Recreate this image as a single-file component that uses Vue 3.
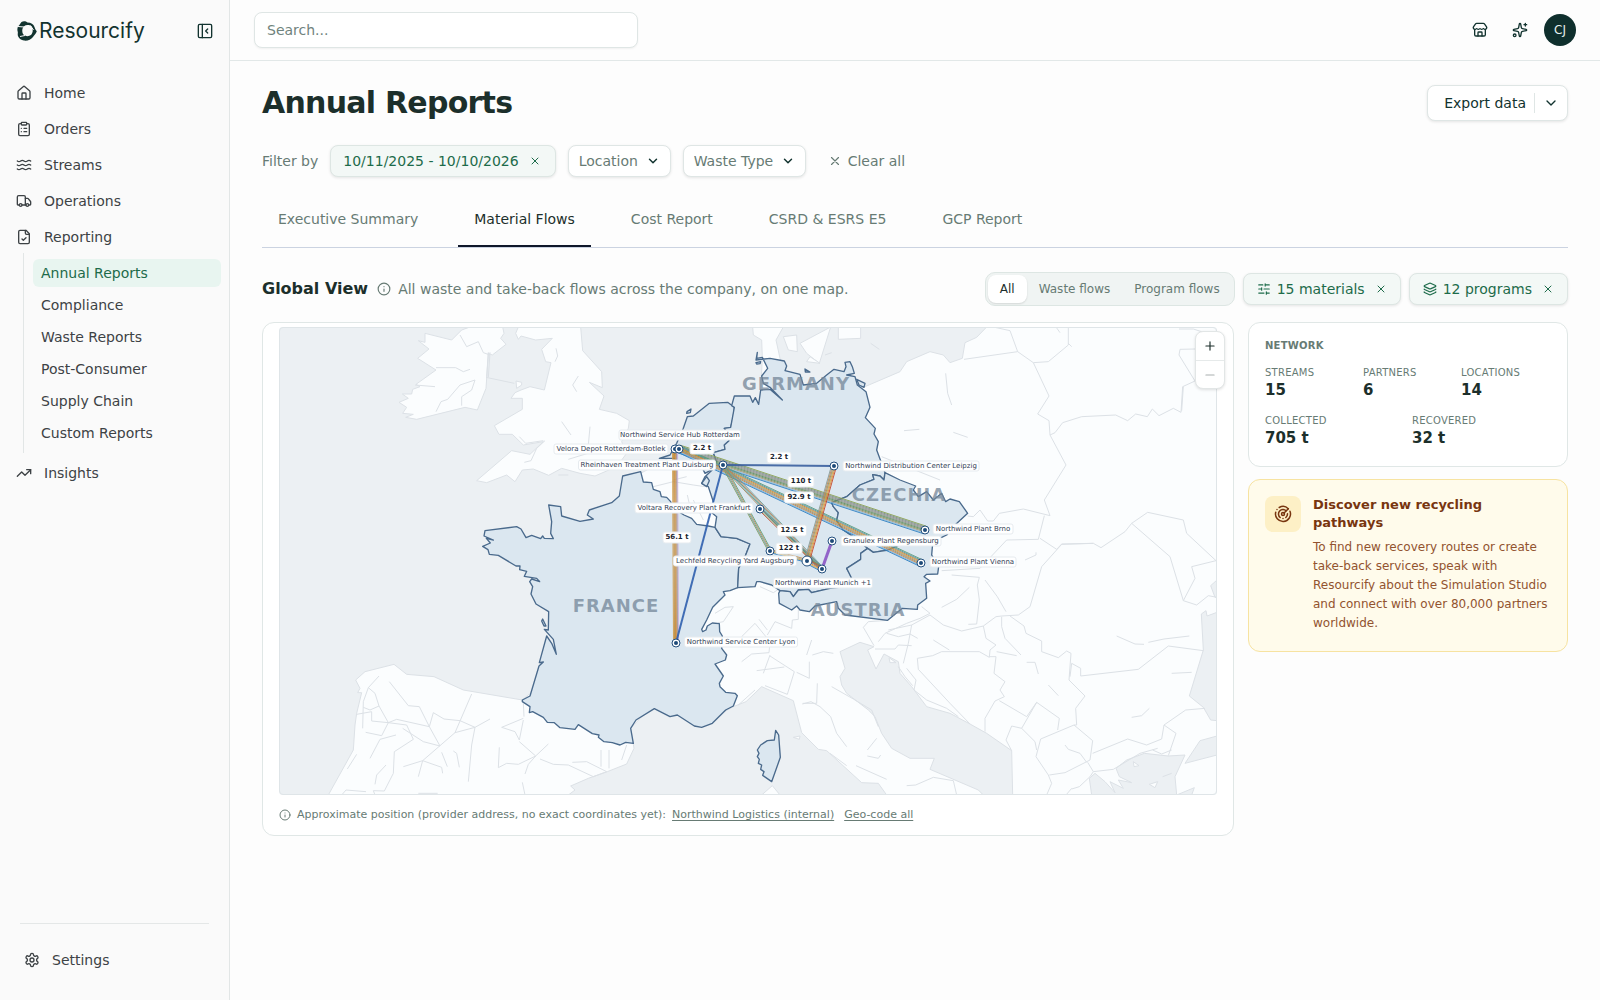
<script setup>
import { h, ref } from 'vue'

const icons = {
  house: '<path d="M15 21v-8a1 1 0 0 0-1-1h-4a1 1 0 0 0-1 1v8"/><path d="M3 10a2 2 0 0 1 .709-1.528l7-6a2 2 0 0 1 2.582 0l7 6A2 2 0 0 1 21 10v9a2 2 0 0 1-2 2H5a2 2 0 0 1-2-2z"/>',
  clipboard: '<rect width="8" height="4" x="8" y="2" rx="1"/><path d="M16 4h2a2 2 0 0 1 2 2v14a2 2 0 0 1-2 2H6a2 2 0 0 1-2-2V6a2 2 0 0 1 2-2h2"/><path d="M12 11h4M12 16h4M8 11h.01M8 16h.01"/>',
  waves: '<path d="M2 6c.6.5 1.200 1 2.500 1C7 7 7 5 9.500 5c2.600 0 2.400 2 5 2 2.500 0 2.500-2 5-2 1.300 0 1.900.5 2.500 1"/><path d="M2 12c.6.5 1.200 1 2.500 1 2.500 0 2.500-2 5-2 2.600 0 2.400 2 5 2 2.500 0 2.500-2 5-2 1.300 0 1.900.5 2.500 1"/><path d="M2 18c.6.5 1.200 1 2.500 1 2.500 0 2.500-2 5-2 2.600 0 2.400 2 5 2 2.500 0 2.500-2 5-2 1.300 0 1.900.5 2.500 1"/>',
  truck: '<path d="M14 18V6a2 2 0 0 0-2-2H4a2 2 0 0 0-2 2v11a1 1 0 0 0 1 1h2"/><path d="M15 18H9"/><path d="M19 18h2a1 1 0 0 0 1-1v-3.650a1 1 0 0 0-.22-.624l-3.480-4.350A1 1 0 0 0 17.520 8H14"/><circle cx="17" cy="18" r="2"/><circle cx="7" cy="18" r="2"/>',
  fileCheck: '<path d="M15 2H6a2 2 0 0 0-2 2v16a2 2 0 0 0 2 2h12a2 2 0 0 0 2-2V7Z"/><path d="M14 2v4a2 2 0 0 0 2 2h4"/><path d="m9 15 2 2 4-4"/>',
  trend: '<path d="M16 7h6v6"/><path d="m22 7-8.500 8.500-5-5L2 17"/>',
  settings: '<path d="M12.220 2h-.44a2 2 0 0 0-2 2v.18a2 2 0 0 1-1 1.730l-.43.25a2 2 0 0 1-2 0l-.15-.08a2 2 0 0 0-2.730.73l-.22.38a2 2 0 0 0 .73 2.730l.15.1a2 2 0 0 1 1 1.720v.51a2 2 0 0 1-1 1.740l-.15.09a2 2 0 0 0-.73 2.730l.22.38a2 2 0 0 0 2.730.73l.15-.08a2 2 0 0 1 2 0l.43.25a2 2 0 0 1 1 1.730V20a2 2 0 0 0 2 2h.44a2 2 0 0 0 2-2v-.18a2 2 0 0 1 1-1.730l.43-.25a2 2 0 0 1 2 0l.15.08a2 2 0 0 0 2.730-.73l.22-.39a2 2 0 0 0-.73-2.730l-.15-.08a2 2 0 0 1-1-1.740v-.5a2 2 0 0 1 1-1.740l.15-.09a2 2 0 0 0 .73-2.730l-.22-.38a2 2 0 0 0-2.730-.73l-.15.08a2 2 0 0 1-2 0l-.43-.25a2 2 0 0 1-1-1.730V4a2 2 0 0 0-2-2z"/><circle cx="12" cy="12" r="3"/>',
  panel: '<rect width="20" height="20" x="2" y="2" rx="2"/><path d="M8 2v20M16 15l-3-3 3-3"/>',
  store: '<path d="M15 21v-5a1 1 0 0 0-1-1h-4a1 1 0 0 0-1 1v5"/><path d="M17.774 10.310a1.120 1.120 0 0 0-1.549 0 2.500 2.500 0 0 1-3.451 0 1.120 1.120 0 0 0-1.548 0 2.500 2.500 0 0 1-3.452 0 1.120 1.120 0 0 0-1.549 0 2.500 2.500 0 0 1-3.770-3.248l2.889-4.184A2 2 0 0 1 7 2h10a2 2 0 0 1 1.653.873l2.895 4.192a2.500 2.500 0 0 1-3.774 3.244"/><path d="M4 10.950V19a2 2 0 0 0 2 2h12a2 2 0 0 0 2-2v-8.050"/>',
  sparkles: '<path d="M11.017 2.814a1 1 0 0 1 1.966 0l1.051 5.558a2 2 0 0 0 1.594 1.594l5.558 1.051a1 1 0 0 1 0 1.966l-5.558 1.051a2 2 0 0 0-1.594 1.594l-1.051 5.558a1 1 0 0 1-1.966 0l-1.051-5.558a2 2 0 0 0-1.594-1.594l-5.558-1.051a1 1 0 0 1 0-1.966l5.558-1.051a2 2 0 0 0 1.594-1.594z"/><path d="M20 2v4M22 4h-4"/><circle cx="4" cy="20" r="2"/>',
  chevron: '<path d="m6 9 6 6 6-6"/>',
  x: '<path d="M18 6 6 18M6 6l12 12"/>',
  info: '<circle cx="12" cy="12" r="10"/><path d="M12 16v-4M12 8h.01"/>',
  sliders: '<path d="M10 5H3M12 19H3M14 3v4M16 17v4M21 12h-9M21 19h-5M21 5h-7M8 10v4M8 12H3"/>',
  layers: '<path d="M12.830 2.180a2 2 0 0 0-1.660 0L2.600 6.080a1 1 0 0 0 0 1.830l8.580 3.910a2 2 0 0 0 1.660 0l8.580-3.900a1 1 0 0 0 0-1.830z"/><path d="M2 12a1 1 0 0 0 .58.91l8.600 3.910a2 2 0 0 0 1.650 0l8.580-3.900A1 1 0 0 0 22 12"/><path d="M2 17a1 1 0 0 0 .58.91l8.600 3.910a2 2 0 0 0 1.650 0l8.580-3.900A1 1 0 0 0 22 17"/>',
  radar: '<path d="M19.070 4.930A10 10 0 0 0 6.990 3.340M4 6h.01M2.290 9.620a10 10 0 1 0 19.020-1.270M16.240 7.760a6 6 0 1 0-8.010 8.910M12 18h.01M17.990 11.660a6 6 0 0 1-2.220 5.010"/><circle cx="12" cy="12" r="2"/><path d="m13.410 10.590 5.660-5.660"/>',
  plus: '<path d="M5 12h14M12 5v14"/>',
  minus: '<path d="M5 12h14"/>',
}

const Icon = (props) =>
  h('svg', {
    viewBox: '0 0 24 24',
    width: props.size || 16,
    height: props.size || 16,
    fill: 'none',
    stroke: 'currentColor',
    'stroke-width': props.stroke || 2,
    'stroke-linecap': 'round',
    'stroke-linejoin': 'round',
    'aria-hidden': 'true',
    innerHTML: icons[props.name],
  })
Icon.props = ['name', 'size', 'stroke']

const mainNav = [
  { label: 'Home', icon: 'house' },
  { label: 'Orders', icon: 'clipboard' },
  { label: 'Streams', icon: 'waves' },
  { label: 'Operations', icon: 'truck' },
  { label: 'Reporting', icon: 'fileCheck' },
]
const reportNav = ['Annual Reports', 'Compliance', 'Waste Reports', 'Post-Consumer', 'Supply Chain', 'Custom Reports']

const tabs = ['Executive Summary', 'Material Flows', 'Cost Report', 'CSRD & ESRS E5', 'GCP Report']
const activeTab = ref('Material Flows')
const flowModes = ['All', 'Waste flows', 'Program flows']
const flowMode = ref('All')

const statsTop = [
  { label: 'Streams', value: '15' },
  { label: 'Partners', value: '6' },
  { label: 'Locations', value: '14' },
]
const statsBottom = [
  { label: 'Collected', value: '705 t' },
  { label: 'Recovered', value: '32 t' },
]

/* Terrain outlines, in terrain units (three per map unit) */
const land = [
  '495,40 575,60 605,30 630,21 728,21 732,40 722,55 738,73 697,105 685,100 678,205 652,270 615,262 470,298 437,292 460,283 428,280 440,262 417,247 445,235 427,222 455,222 458,208 480,200 468,193 528,150 473,115 507,87 475,62 495,67',
  '775,21 767,40 775,58 783,48 827,60 877,55 845,88 857,125 873,128 853,210 810,200 783,210 765,218 753,235 787,235 787,268 703,317 717,343 757,343 790,375 850,365 810,403 755,392 650,482 680,488 740,465 765,485 787,450 820,447 866,466 905,445 960,460 1005,468 1070,440 1100,400 1085,365 1105,325 1108,302 1070,280 1018,268 1032,228 988,187 1027,203 1025,155 968,92 962,21',
  '768,183 785,187 785,195 770,205',
  '205,1425 280,1290 285,1215 290,1180 305,1118 293,1118 300,1105 287,1080 315,1055 402,1033 440,1063 522,1070 610,1110 787,1140 950,1000 1142,460 1235,410 1300,330 1423,270 1500,260 1507,112 1505,60 1480,45 1478,21 1570,21 1548,60 1560,115 1600,240 1815,200 1920,155 1940,125 2010,95 2050,105 2070,128 2107,115 2115,68 2150,52 2180,21 2871,21 2871,1425',
  '1570,50 1610,45 1612,95 1585,90',
  '1620,70 1712,21 1678,130 1640,100',
  '1735,21 1802,21 1802,55 1735,58',
  '1640,125 1650,110 1680,130',
]
const seas = [
  '925,1425 945,1410 932,1398 985,1375 1042,1355 1100,1332 1122,1285 1112,1225 1183,1150 1250,1180 1330,1210 1420,1160 1458,1145 1505,1100 1600,1142 1625,1238 1675,1288 1700,1292 1805,1388 1855,1390 1880,1425',
  '1740,995 1800,967 1842,980 1823,990 1848,1047 1872,1002 1915,1025 1920,1060 1955,1100 2000,1160 2070,1180 2130,1212 2180,1240 2255,1292 2258,1425 2170,1425 2155,1410 2010,1348 2023,1315 1950,1315 1895,1285 1865,1240 1845,1190 1825,1170 1760,1120 1745,1095 1740,1070 1755,1045',
  '2871,877 2841,888 2838,872 2824,882 2830,990 2788,1128 2830,1162 2852,1200 2871,1202',
  '2871,780 2852,797 2865,832 2871,832',
  '2871,1248 2820,1262 2775,1330 2871,1305',
  '2495,1425 2488,1375 2505,1360 2535,1385 2565,1418 2550,1385 2590,1405 2575,1380 2615,1388 2578,1370 2568,1345 2600,1320 2653,1300 2725,1308 2775,1305 2745,1370 2750,1425',
  '2750,1425 2803,1403 2795,1425',
]
const islands = [
  '1505,1425 1537,1397 1560,1425',
  '1600,1252 1620,1248 1618,1258',
  '2620,1325 2637,1337 2622,1340',
  '2668,1393 2693,1385 2685,1403',
  '1887,1013 1908,1028 1890,1028',
]
const countries = [
  '866,555 902,560 905,588 960,604 1000,597 982,585 988,570 1055,548 1078,528 1088,468 1142,455 1150,486 1175,488 1180,508 1200,515 1204,530 1220,532 1232,545 1240,565 1272,585 1295,595 1310,613 1345,618 1365,622 1383,650 1430,655 1470,672 1455,710 1436,745 1433,803 1410,812 1390,815 1395,825 1358,862 1340,900 1325,928 1328,935 1338,930 1342,918 1357,909 1378,911 1379,935 1387,948 1385,985 1400,1005 1396,1020 1365,1032 1390,1068 1378,1090 1380,1100 1397,1117 1425,1120 1432,1127 1420,1158 1397,1170 1357,1210 1325,1222 1303,1218 1252,1185 1230,1190 1183,1166 1128,1200 1112,1225 1120,1270 1097,1267 1080,1275 1057,1268 1032,1265 1015,1252 1017,1245 997,1241 955,1214 945,1228 900,1223 883,1208 862,1207 850,1192 818,1175 808,1178 810,1160 787,1145 787,1140 810,1128 837,1038 850,1026 838,1028 860,948 875,970 889,1003 880,958 853,928 865,930 866,875 828,852 813,822 818,800 809,785 815,777 839,785 830,775 793,769 800,754 779,749 780,738 768,738 715,706 688,703 684,689 668,679 691,669 679,655 700,660 672,648 675,632 770,620 783,627 798,653 815,646 842,656 848,648 853,655 880,656 872,640 875,605',
  '1547,1231 1556,1245 1561,1312 1535,1385 1508,1366 1512,1355 1502,1348 1505,1335 1495,1330 1498,1318 1492,1310 1497,1300 1492,1290 1502,1275 1522,1262 1543,1260',
  '848,897 858,918 852,918 845,903',
  '1270,325 1282,290 1300,288 1348,250 1403,247 1423,262 1420,290 1412,322 1393,325 1407,345 1407,362 1393,375 1395,388 1360,398 1370,425 1362,445 1335,460 1325,440 1300,425 1270,430 1240,415 1198,415 1230,405 1250,370',
  '1281,275 1293,267 1291,278 1280,280',
  '1415,257 1423,228 1470,228 1478,247 1486,233 1496,253 1502,210 1530,208 1567,240 1530,202 1510,190 1505,168 1523,145 1507,112 1490,115 1492,97 1488,120 1530,115 1573,123 1580,138 1575,152 1620,163 1630,195 1670,190 1700,165 1722,148 1752,155 1758,140 1755,127 1770,125 1777,140 1783,160 1760,165 1785,170 1792,195 1818,215 1830,262 1816,293 1846,325 1842,342 1855,365 1850,390 1862,422 1875,458 1872,480 1860,468 1838,464 1842,478 1800,495 1760,530 1715,548 1720,560 1735,578 1730,602 1750,630 1780,650 1823,685 1802,700 1802,718 1760,745 1770,762 1775,775 1770,798 1710,805 1655,818 1645,808 1615,810 1600,830 1590,815 1560,812 1535,795 1500,785 1490,785 1485,800 1433,803 1436,745 1455,710 1470,672 1430,655 1383,650 1365,622 1370,590 1352,575 1360,545 1345,500 1325,490 1335,470 1362,445 1370,425 1360,398 1395,388 1393,375 1407,362 1407,345 1393,325 1412,322 1423,262',
  '1635,147 1650,156 1636,156',
  '1790,178 1815,190 1812,202 1797,195',
  '1488,128 1502,125 1500,131 1490,132',
  '1325,490 1340,470 1348,482 1340,500',
  '1875,458 1920,480 1967,498 1960,510 1975,530 2000,515 2020,540 2045,520 2057,545 2070,537 2098,545 2123,580 2085,615 2060,645 2045,652 2000,655 1940,665 1885,690 1840,697 1823,685 1780,650 1750,630 1730,602 1735,578 1720,560 1715,548 1760,530 1800,495 1842,478 1838,464 1860,468 1872,480',
  '1823,685 1840,697 1885,690 1940,665 2000,655 2018,670 2015,705 2036,740 2033,762 2000,763 1992,770 2010,783 1997,790 2000,835 1973,855 1972,868 1927,865 1883,901 1755,885 1735,865 1730,845 1665,858 1648,875 1620,870 1610,858 1595,870 1558,850 1556,820 1560,812 1590,815 1600,830 1615,810 1645,808 1655,818 1710,805 1770,798 1775,775 1760,745 1802,718 1802,700',
]
const borders = [
  '357,1068 325,1103 310,1145 308,1225', '325,1103 345,1120 357,1158 330,1170 310,1162',
  '290,1183 335,1175 335,1203 385,1208 440,1215 460,1258 403,1295 400,1360 373,1413 340,1412 345,1425',
  '357,1158 385,1208 365,1247 317,1237', '388,1085 445,1157 478,1160 508,1220 540,1278 490,1265 428,1225',
  '385,1208 410,1198 508,1220 520,1178 552,1197 600,1202 645,1222 690,1197', '635,1122 585,1238 645,1222 635,1275 625,1385',
  '585,1238 488,1322 430,1340', '488,1322 475,1370', '488,1322 545,1342 548,1360', '545,1297 562,1340', '580,1293 590,1300 598,1342',
  '330,1315 360,1258 408,1245', '262,1347 290,1303', '345,1393 350,1365 378,1335', '245,1425 258,1410 318,1415', '475,1420 533,1420',
  '790,1150 792,1190', '790,1195 725,1222 765,1235 778,1260 790,1200', '778,1265 827,1308 865,1272',
  '718,1282 715,1343 740,1330 775,1333 827,1308 805,1333 795,1362', '840,1317 880,1333 925,1335 1000,1370 1040,1355 980,1325 937,1327',
  '787,1387 795,1425', '1023,1290 1023,1340', '1047,1290 1047,1345', '1100,1275 1085,1320',
  '955,168 938,195 950,215', '905,305 933,345', '990,320 985,375', '888,85 893,108 885,125', '778,350 797,370 850,362',
  '855,362 830,385 813,422 793,427', '925,418 1000,395', '895,465 925,465',
  '528,143 587,143 610,155 630,148', '645,180 600,195 563,238 543,245 528,275', '645,180 635,210 605,230 605,257', '685,97 680,170', '690,97 685,172', '465,195 525,200', '600,45 620,80 655,65 670,98 690,105',
  '678,172 763,190', '1180,500 1240,485 1300,495 1335,500', '1282,525 1290,560', '1300,540 1330,600', '1280,470 1240,480',
  '1365,880 1395,862 1420,860 1390,905 1375,908', '1445,950 1485,910 1530,965', '1497,898 1522,930', '1522,945 1545,905 1595,925 1597,900 1615,898 1615,870',
  '1445,1025 1475,1002 1527,998 1530,965', '1530,1005 1510,1060', '1490,1052 1573,1041', '1530,1008 1603,1055 1582,1123 1515,1097',
  '1610,1057 1648,1075 1648,1025', '1640,1005 1655,960', '1672,1090 1670,1150 1628,1150', '1435,1155 1485,1110', '1500,800 1540,818 1560,805',
  '1715,1100 1780,1137 1835,1170 1855,1220', '1627,1152 1653,1145 1680,1160 1712,1190 1730,1240 1760,1280', '1822,1290 1850,1255', '1822,1308 1855,1315 1862,1305',
  '1788,1337 1880,1378', '1940,1397 1967,1395 2020,1372 2080,1382 2090,1425', '1710,1300 1760,1337', '1657,1005 1690,995 1720,1000',
  '1883,901 1825,905 1810,922 1842,977', '1855,965 1875,940 1940,910 1980,895 2010,880 1985,860', '1885,930 1955,915 1945,970 1930,1030',
  '1845,987 1905,987 1915,975 1955,977', '1880,940 1915,950 1950,942 1973,955', '1955,915 2010,885 2050,915 2105,933 2170,918 2208,890 2225,888 2275,885 2310,860 2345,740 2405,673 2500,670',
  '2075,765 2158,772 2152,795 2158,840 2150,912 2125,913', '2175,780 2212,830 2238,875', '2045,862 2090,838 2128,802',
  '2170,918 2178,955 2208,975 2190,990 2188,1012 2158,995 2045,995 2018,1007 1972,1015 1975,1048 2070,1150 2130,1212',
  '2225,890 2225,920 2235,955 2283,1005', '2250,888 2292,918 2298,940 2345,963 2345,995 2395,1013 2420,993 2433,1000 2427,1080 2475,1128 2447,1165 2450,1215',
  '2020,960 2068,990', '2210,995 2270,1007', '2300,1027 2325,1027 2335,1062', '2365,1095 2395,1127',
  '2190,1010 2208,1010 2202,1060 2235,1085 2220,1110 2233,1130 2205,1143 2175,1195 2175,1235', '2218,1142 2300,1190 2330,1147 2398,1195 2393,1230',
  '2330,1147 2285,1225 2255,1218 2238,1260 2255,1292', '2285,1225 2325,1265 2330,1290', '1915,1040 1935,1070 1958,1097', '1940,1045 1968,1080 1962,1110 2000,1140 2060,1165 2095,1190',
  '2045,752 2160,745 2240,660 2335,658 2353,587', '2340,655 2390,688', '2295,720 2328,705 2328,697',
  '2123,588 2140,590 2160,570 2183,603 2200,603 2218,580 2290,567 2370,587 2353,540 2418,435 2370,345 2367,302 2333,282 2367,228 2320,128 2273,95 2250,32 2200,21',
  '2112,118 2273,95', '2320,128 2365,125 2425,75 2425,21', '2388,21 2400,38', '2425,70 2435,80',
  '2370,345 2385,338 2408,308 2465,290 2567,285 2603,302 2627,282 2662,290 2677,267 2697,287 2740,265 2763,277 2768,200 2805,183 2757,105 2760,88 2805,87', '2757,27 2800,27 2840,40', '2765,272 2770,200',
  '2390,688 2405,672 2500,670 2523,683 2595,635 2615,610 2663,577 2770,600 2780,640 2868,722 2795,740 2805,775 2770,842 2730,710 2615,610', '2770,842 2810,855 2845,827 2871,832',
  '2570,948 2625,972 2652,973', '2665,967 2712,957 2788,948', '2430,1070 2435,1030 2462,1045 2462,1068 2635,1048 2725,978 2830,992',
  '2735,1060 2795,1057', '2615,1192 2645,1187 2668,1165', '2450,1215 2442,1215 2342,1257 2328,1310 2365,1365 2375,1390 2360,1425', '2442,1215 2498,1262 2490,1320 2415,1358 2368,1365',
  '2498,1300 2603,1257 2660,1275 2705,1257 2712,1215 2777,1170 2835,1165', '2712,1215 2748,1240 2725,1307', '2483,1327 2500,1355 2560,1348 2640,1300 2693,1285', '2415,1275 2425,1288 2460,1300 2480,1327',
  '2678,1290 2705,1302 2735,1290', '2435,1407 2458,1400 2490,1370 2500,1355', '2418,1425 2435,1405',
  '2057,160 2063,220 2075,255', '1932,332 1978,328', '2080,337 2123,352', '1865,410 2040,480', '1832,70 1858,88', '1695,105 1715,98', '2708,1370 2735,1360',
]

/* Sites and flows, in map units */
const sites = {
  botlek: [396, 122], hub: [400, 122], duisburg: [444, 138], leipzig: [555, 139], frankfurt: [481, 182], stuttgart: [491, 224],
  augsburg: [528, 234], munich: [543, 242], regensburg: [553, 214], brno: [646, 203], vienna: [642, 236], lyon: [397, 316],
}
const bundles = [
  { from: 'hub', to: 'brno', colors: ['#2f7fc1', '#8bb8d8', '#a59a72', '#7c8f5f', '#5f8f5f', '#8c9187', '#8f8f8a', '#7c8f86', '#8aa04a'].reverse() },
  { from: 'hub', to: 'vienna', colors: ['#5f9a7a', '#4f98a0', '#b98545', '#cf9a3a', '#94907c', '#c98540', '#7fb0d4', '#2f7fc1'] },
  { from: 'botlek', to: 'lyon', colors: ['#c9a9dc', '#9a948c', '#c98a4e', '#c98522', '#b98a3e', '#cf9a4a'] },
  { from: 'duisburg', to: 'stuttgart', colors: ['#5fa07c', '#b98f58', '#6f9a96', '#7f9a60'] },
  { from: 'duisburg', to: 'munich', colors: ['#6fa39a', '#c27a5a', '#6f9a70', '#5f9aa0', '#a9885a'] },
  { from: 'frankfurt', to: 'munich', colors: ['#5f8f9c', '#4f8578', '#8f9a5f', '#c2553a'] },
  { from: 'stuttgart', to: 'augsburg', colors: ['#c98d4d', '#a8a890', '#d9a646', '#2f7fc1'] },
  { from: 'leipzig', to: 'augsburg', colors: ['#c2452e', '#e08a3c', '#cfa440', '#958f6c', '#c08a50', '#8a9a94'] },
  { from: 'augsburg', to: 'munich', colors: ['#6f8f5f', '#c2553a', '#7c8f86', '#e08a3c', '#d9a646', '#2f7fc1'] },
  { from: 'duisburg', to: 'lyon', colors: ['#2f5fae'], width: 2 },
  { from: 'duisburg', to: 'leipzig', colors: ['#3a5f9e'], width: 2 },
  { from: 'regensburg', to: 'munich', colors: ['#8a55c4'], width: 3 },
]
const flowLines = bundles.flatMap(({ from, to, colors, width = 1 }) => {
  const [x1, y1] = sites[from]
  const [x2, y2] = sites[to]
  const length = Math.hypot(x2 - x1, y2 - y1)
  const nx = -(y2 - y1) / length
  const ny = (x2 - x1) / length
  return colors.map((color, i) => {
    const o = i - (colors.length - 1) / 2
    return { x1: x1 + nx * o, y1: y1 + ny * o, x2: x2 + nx * o, y2: y2 + ny * o, color, width }
  })
})

const siteLabels = [
  { text: 'Northwind Service Hub Rotterdam', x: 401, y: 108, w: 122 },
  { text: 'Velora Depot Rotterdam-Botlek', x: 332, y: 122, w: 114 },
  { text: 'Rheinhaven Treatment Plant Duisburg', x: 368, y: 138, w: 137 },
  { text: 'Voltara Recovery Plant Frankfurt', x: 415, y: 181, w: 118 },
  { text: 'Northwind Distribution Center Leipzig', x: 632, y: 139, w: 136 },
  { text: 'Northwind Plant Brno', x: 694, y: 202, w: 80 },
  { text: 'Granulex Plant Regensburg', x: 612, y: 214, w: 100 },
  { text: 'Northwind Plant Vienna', x: 694, y: 235, w: 86 },
  { text: 'Lechfeld Recycling Yard Augsburg', x: 456, y: 234, w: 123 },
  { text: 'Northwind Plant Munich +1', x: 544, y: 256, w: 99 },
  { text: 'Northwind Service Center Lyon', x: 462, y: 315, w: 113 },
]
const weights = [
  { text: '2.2 t', x: 423, y: 121, w: 24 },
  { text: '2.2 t', x: 500, y: 130, w: 24 },
  { text: '110 t', x: 522, y: 154, w: 26 },
  { text: '92.9 t', x: 520, y: 170, w: 29 },
  { text: '12.5 t', x: 513, y: 203, w: 29 },
  { text: '122 t', x: 510, y: 221, w: 26 },
  { text: '56.1 t', x: 398, y: 210, w: 28 },
]
const countryNames = [
  { text: 'GERMANY', x: 517, y: 56 },
  { text: 'CZECHIA', x: 620, y: 167 },
  { text: 'FRANCE', x: 337, y: 278 },
  { text: 'AUSTRIA', x: 579, y: 282 },
]
</script>

<template>
  <div class="app">
    <aside class="sidebar">
      <div class="brand">
        <a class="logo" href="#">
          <svg class="logo-mark" viewBox="0 0 20 20" width="20" height="20" aria-hidden="true">
            <path fill-rule="evenodd" d="M4.500 1C6.500-.3 9 .2 10.500 1.500 14 1.500 16.500 3 17.500 6c.3 1.500 1.200 3 2.300 4.200C19 13 17 14 16 16c-2 2.800-5.500 4-9 3.600C4 19 2.500 18 1.500 16 .2 14.500 1 12.500.8 11 .2 9.500.2 7 1 5.500 2.500 4.500 3 2.500 4.500 1ZM7 5.200C5 7 4.800 10.500 6 13c2 2.500 5.500 2.800 8 1 2.200-2.500 2.200-6 .5-8.500C12.500 3.600 9 3.700 7 5.200Z" />
            <path class="logo-cut" d="M1 5.500 7 6M13.500 4.500 16.500 9M3 15.500l5-1" />
          </svg>
          <span>Resourcify</span>
        </a>
        <button class="icon-btn small" aria-label="Collapse sidebar"><Icon name="panel" /></button>
      </div>
      <nav class="nav">
        <a v-for="item in mainNav" :key="item.label" class="nav-item" href="#"><Icon :name="item.icon" />{{ item.label }}</a>
        <div class="sub-nav">
          <a v-for="(label, i) in reportNav" :key="label" class="sub-item" :class="{ active: i === 0 }" href="#">{{ label }}</a>
        </div>
        <a class="nav-item" href="#"><Icon name="trend" />Insights</a>
      </nav>
      <div class="sidebar-foot">
        <a class="nav-item" href="#"><Icon name="settings" />Settings</a>
      </div>
    </aside>

    <div class="page">
      <header class="topbar">
        <input class="search" type="search" placeholder="Search..." aria-label="Search" />
        <div class="top-actions">
          <button class="icon-btn" aria-label="Marketplace"><Icon name="store" /></button>
          <button class="icon-btn" aria-label="Assistant"><Icon name="sparkles" /></button>
          <button class="avatar">CJ</button>
        </div>
      </header>

      <main class="content">
        <div class="title-row">
          <h1>Annual Reports</h1>
          <div class="export">
            <button class="export-main">Export data</button>
            <button class="export-more" aria-label="More export options"><Icon name="chevron" /></button>
          </div>
        </div>

        <div class="filters">
          <span class="filter-by">Filter by</span>
          <button class="chip selected date">10/11/2025 - 10/10/2026<Icon name="x" size="12" /></button>
          <div class="select-wrap">
            <select aria-label="Location"><option>Location</option></select>
            <Icon name="chevron" size="14" stroke="2.500" />
          </div>
          <div class="select-wrap">
            <select aria-label="Waste Type"><option>Waste Type</option></select>
            <Icon name="chevron" size="14" stroke="2.500" />
          </div>
          <button class="clear"><Icon name="x" size="14" />Clear all</button>
        </div>

        <div class="tabs" role="tablist">
          <button v-for="tab in tabs" :key="tab" class="tab" role="tab" :aria-selected="tab === activeTab" :class="{ active: tab === activeTab }" @click="activeTab = tab">{{ tab }}</button>
        </div>

        <div class="view-bar">
          <h2>Global View</h2>
          <Icon class="info" name="info" size="14" />
          <p>All waste and take-back flows across the company, on one map.</p>
          <div class="view-actions">
            <div class="segmented">
              <button v-for="mode in flowModes" :key="mode" :aria-pressed="mode === flowMode" :class="{ active: mode === flowMode }" @click="flowMode = mode">{{ mode }}</button>
            </div>
            <button class="chip selected tall"><Icon name="sliders" size="14" />15 materials<Icon class="close" name="x" size="12" /></button>
            <button class="chip selected tall"><Icon name="layers" size="14" />12 programs<Icon class="close" name="x" size="12" /></button>
          </div>
        </div>

        <div class="view-body">
          <section class="card map-card">
            <svg class="map" viewBox="0 0 938 468" role="img" aria-label="Material flows map">
              <svg x="0" y="0" width="938" height="468" viewBox="57 21 2814 1404">
                <g class="land"><polygon v-for="p in land" :key="p" :points="p" /></g>
                <g class="sea"><polygon v-for="p in seas" :key="p" :points="p" /></g>
                <g class="land"><polygon v-for="p in islands" :key="p" :points="p" /></g>
                <g class="border-lines"><polyline v-for="p in borders" :key="p" :points="p" /></g>
                <g class="country"><polygon v-for="(p, i) in countries" :key="i" :points="p" /></g>
              </svg>
              <text v-for="c in countryNames" :key="c.text" class="country-name" :x="c.x" :y="c.y + 7">{{ c.text }}</text>
              <line v-for="(f, i) in flowLines" :key="i" :x1="f.x1" :y1="f.y1" :x2="f.x2" :y2="f.y2" :stroke="f.color" :stroke-width="f.width" stroke-opacity="0.9" />
              <g v-for="(s, name) in sites" :key="name" class="site">
                <circle class="ring" :cx="s[0]" :cy="s[1]" :r="name === 'augsburg' ? 5 : 4" />
                <circle class="dot" :cx="s[0]" :cy="s[1]" r="2" />
              </g>
              <g v-for="l in siteLabels" :key="l.text" class="site-label">
                <rect :x="l.x - l.w / 2" :y="l.y - 5" :width="l.w" height="10" rx="2" />
                <text :x="l.x" :y="l.y + 2">{{ l.text }}</text>
              </g>
              <g v-for="(l, i) in weights" :key="i" class="weight">
                <rect :x="l.x - l.w / 2" :y="l.y - 5" :width="l.w" height="11" rx="2" />
                <text :x="l.x" :y="l.y + 2">{{ l.text }}</text>
              </g>
            </svg>
            <div class="zoom">
              <button aria-label="Zoom in"><Icon name="plus" size="14" /></button>
              <button aria-label="Zoom out" disabled><Icon name="minus" size="14" /></button>
            </div>
            <p class="map-note">
              <Icon name="info" size="12" />
              <span>Approximate position (provider address, no exact coordinates yet):</span>
              <a href="#">Northwind Logistics (internal)</a>
              <a class="geo" href="#">Geo-code all</a>
            </p>
          </section>

          <div class="side">
            <section class="card network">
              <h3>NETWORK</h3>
              <dl class="stats three">
                <div v-for="s in statsTop" :key="s.label"><dt>{{ s.label }}</dt><dd>{{ s.value }}</dd></div>
              </dl>
              <dl class="stats two">
                <div v-for="s in statsBottom" :key="s.label"><dt>{{ s.label }}</dt><dd>{{ s.value }}</dd></div>
              </dl>
            </section>
            <section class="discover">
              <div class="discover-icon"><Icon name="radar" size="18" /></div>
              <div>
                <h3>Discover new recycling pathways</h3>
                <p>To find new recovery routes or create take-back services, speak with Resourcify about the Simulation Studio and connect with over 80,000 partners worldwide.</p>
              </div>
            </section>
          </div>
        </div>
      </main>
    </div>
  </div>
</template>

<style>
body {
  background: #fdfdfd;
}
</style>

<style scoped>
.app {
  display: flex;
  min-height: 100vh;
  font-family: "DejaVu Sans", sans-serif;
  font-size: 14px;
  line-height: 20px;
  color: #1c2f2b;
}
.app *,
.app *::before {
  box-sizing: border-box;
}
button,
input,
select {
  font: inherit;
  color: inherit;
}
button {
  display: flex;
  align-items: center;
  justify-content: center;
  margin: 0;
  padding: 0;
  border: 0;
  background: none;
  white-space: nowrap;
  cursor: pointer;
}
a {
  color: inherit;
  text-decoration: none;
}
h1,
h2,
h3,
p,
dl,
dd {
  margin: 0;
}
svg {
  flex: none;
}

.sidebar {
  display: flex;
  flex: none;
  flex-direction: column;
  width: 230px;
  background: #fafafa;
  border-right: 1px solid #e2e6e6;
}
.brand {
  display: flex;
  align-items: center;
  justify-content: space-between;
  height: 62px;
  padding: 0 12px 0 17px;
}
.logo {
  display: flex;
  align-items: center;
  gap: 2px;
  color: #12332f;
  font-family: Inter, sans-serif;
  font-size: 21px;
}
.logo-mark {
  fill: #12332f;
}
.logo-cut {
  stroke: #fafafa;
  fill: none;
}
.icon-btn {
  width: 40px;
  height: 40px;
  color: #12332f;
}
.icon-btn.small {
  width: 24px;
  height: 24px;
}
.nav {
  padding: 13px 8px 0;
}
.nav-item {
  display: flex;
  align-items: center;
  gap: 12px;
  height: 36px;
  padding-left: 8px;
  color: #3d4245;
}
.sub-nav {
  display: flex;
  flex-direction: column;
  gap: 4px;
  margin: -2px 0 2px 15px;
  padding: 6px 0 6px 9px;
  border-left: 1px solid #e2e6e6;
}
.sub-item {
  height: 28px;
  padding: 4px 8px;
  border-radius: 6px;
  color: #3d4245;
}
.sub-item.active {
  background: #e8f5f0;
  color: #1d6b4a;
}
.sidebar-foot {
  margin: auto 20px 22px;
  padding: 18px 0 0;
  border-top: 1px solid #e4e7e7;
}
.sidebar-foot .nav-item {
  padding-left: 4px;
}

.page {
  flex: 1;
  min-width: 0;
}
.topbar {
  display: flex;
  align-items: center;
  justify-content: space-between;
  height: 61px;
  padding: 0 24px;
  border-bottom: 1px solid #e2e8e8;
}
.search {
  width: 384px;
  height: 36px;
  padding: 0 12px;
  border: 1px solid #dfe6e5;
  border-radius: 8px;
  background: #fff;
  box-shadow: 0 1px 2px rgba(0, 0, 0, 0.05);
  outline: 0;
}
.search::placeholder {
  color: #70837d;
  opacity: 1;
}
.top-actions {
  display: flex;
  align-items: center;
}
.avatar {
  width: 32px;
  height: 32px;
  margin-left: 4px;
  border-radius: 50%;
  background: #0f2f2d;
  color: #e6f0ee;
  font-size: 12px;
}

.content {
  padding: 24px 32px;
}
.title-row {
  display: flex;
  align-items: center;
  justify-content: space-between;
}
h1 {
  color: #1c2f2b;
  font-size: 30px;
  line-height: 36px;
  letter-spacing: -0.025em;
}
.export {
  display: flex;
  align-items: center;
  height: 36px;
  border: 1px solid #dfe6e5;
  border-radius: 8px;
  background: #fff;
  box-shadow: 0 1px 3px rgba(0, 0, 0, 0.1);
  color: #12332f;
}
.export-main {
  height: 20px;
  padding: 0 8px 0 16px;
  border-right: 1px solid #dfe6e5;
}
.export-more {
  width: 32px;
  height: 34px;
}
.filters {
  display: flex;
  align-items: center;
  gap: 12px;
  margin-top: 24px;
  color: #677b74;
}
.chip {
  gap: 6px;
  height: 32px;
  padding: 0 12px;
  border: 1px solid #dde6e3;
  border-radius: 8px;
  box-shadow: 0 1px 3px rgba(0, 0, 0, 0.1);
}
.chip.selected {
  background: #f3f8f6;
  color: #1d6b4a;
}
.chip.date {
  gap: 10px;
  padding-right: 14px;
}
.chip.tall {
  padding: 0 13px;
}
.chip .close {
  margin-left: 4px;
}
.select-wrap {
  position: relative;
  display: flex;
  align-items: center;
}
.select-wrap select {
  appearance: none;
  height: 32px;
  padding: 0 31px 0 10px;
  border: 1px solid #dfe6e5;
  border-radius: 8px;
  background: #fff;
  box-shadow: 0 1px 3px rgba(0, 0, 0, 0.1);
}
.select-wrap svg {
  position: absolute;
  right: 11px;
  color: #12332f;
  pointer-events: none;
}
.clear {
  gap: 6px;
  padding: 0 10px;
}
.tabs {
  display: flex;
  gap: 24px;
  margin-top: 24px;
  border-bottom: 1px solid #cbd3e1;
}
.tab {
  height: 46px;
  padding: 0 16px 9px;
  border-bottom: 2px solid transparent;
  color: #677b74;
}
.tab.active {
  border-color: #0f172a;
  color: #1c2f2b;
}

.view-bar {
  display: flex;
  align-items: center;
  margin-top: 24px;
  color: #677b74;
}
h2 {
  color: #1c2f2b;
  font-size: 16px;
}
.info {
  margin: 0 7px 0 9px;
}
.view-actions {
  display: flex;
  align-items: center;
  gap: 8px;
  margin-left: auto;
}
.segmented {
  display: flex;
  padding: 2px;
  border: 1px solid #dde6e3;
  border-radius: 10px;
  background: #f0f4f3;
  font-size: 12px;
}
.segmented button {
  height: 28px;
  padding: 0 12px;
  border-radius: 8px;
}
.segmented .active {
  background: #fff;
  box-shadow: 0 1px 2px rgba(0, 0, 0, 0.12);
  color: #1c2f2b;
}

.view-body {
  display: flex;
  align-items: flex-start;
  gap: 14px;
  margin-top: 16px;
}
.card {
  border: 1px solid #e0e7e6;
  border-radius: 12px;
  background: #fff;
}
.map-card {
  position: relative;
  flex: 1;
  min-width: 0;
  padding: 4px 16px 10px;
}
.map {
  display: block;
  width: 100%;
  border-radius: 4px;
  outline: 1px solid #dfe5e8;
  outline-offset: -1px;
  background: #ecf0f3;
}
.land {
  fill: #fbfdfe;
  stroke: #dce1e6;
  stroke-width: 3px;
}
.sea {
  fill: #ecf0f3;
  stroke: #dce1e6;
  stroke-width: 3px;
}
.border-lines {
  fill: none;
  stroke: #dce1e6;
  stroke-width: 3px;
}
.country {
  fill: #dbe7f0;
  stroke: #4a6a8c;
  stroke-width: 4px;
  stroke-linejoin: round;
}
.country-name {
  fill: #748698;
  fill-opacity: 0.75;
  font-size: 18px;
  font-weight: 700;
  letter-spacing: 1px;
  text-anchor: middle;
}
.ring {
  fill: #fff;
  stroke: #24507e;
}
.dot {
  fill: #1d4a78;
}
.site-label rect,
.weight rect {
  fill: #fff;
  stroke: #e6ebef;
}
.site-label text {
  fill: #334155;
  font-size: 7px;
  text-anchor: middle;
}
.weight text {
  fill: #1c2530;
  font-size: 7px;
  font-weight: 700;
  text-anchor: middle;
}
.zoom {
  position: absolute;
  top: 8px;
  right: 8px;
  overflow: hidden;
  border: 1px solid #e2e6e6;
  border-radius: 8px;
  background: #fff;
  box-shadow: 0 1px 3px rgba(0, 0, 0, 0.12);
}
.zoom button {
  width: 28px;
  height: 28px;
}
.zoom button + button {
  border-top: 1px solid #e6eaea;
  color: #a9b0b0;
}
.map-note {
  display: flex;
  align-items: center;
  gap: 6px;
  padding: 10px 0 0;
  color: #677b74;
  font-size: 11px;
}
.map-note a {
  text-decoration: underline;
  text-underline-offset: 2px;
}
.map-note .geo {
  margin-left: 4px;
}

.side {
  display: flex;
  flex: none;
  flex-direction: column;
  gap: 12px;
  width: 320px;
}
.network {
  padding: 13px 16px 18px;
}
.network h3 {
  color: #677b74;
  font-size: 10px;
  letter-spacing: 0.025em;
}
.stats {
  display: grid;
  gap: 8px;
  margin-top: 9px;
}
.three {
  grid-template-columns: repeat(3, 1fr);
}
.two {
  grid-template-columns: repeat(2, 1fr);
  margin-top: 13px;
}
dt {
  color: #677b74;
  font-size: 10px;
  line-height: 15px;
  letter-spacing: 0.025em;
  text-transform: uppercase;
}
dd {
  color: #1c2f2b;
  font-size: 15px;
  font-weight: 700;
}
.discover {
  display: flex;
  gap: 12px;
  padding: 16px 16px 18px;
  border: 1px solid #f7e3a1;
  border-radius: 12px;
  background: #fffbeb;
}
.discover-icon {
  display: flex;
  flex: none;
  align-items: center;
  justify-content: center;
  width: 36px;
  height: 36px;
  border-radius: 8px;
  background: #fdf0c6;
  color: #78350f;
}
.discover h3 {
  color: #78350f;
  font-size: 13px;
  line-height: 18px;
}
.discover p {
  margin-top: 6px;
  color: #92532f;
  font-size: 12px;
  line-height: 19px;
}
</style>
